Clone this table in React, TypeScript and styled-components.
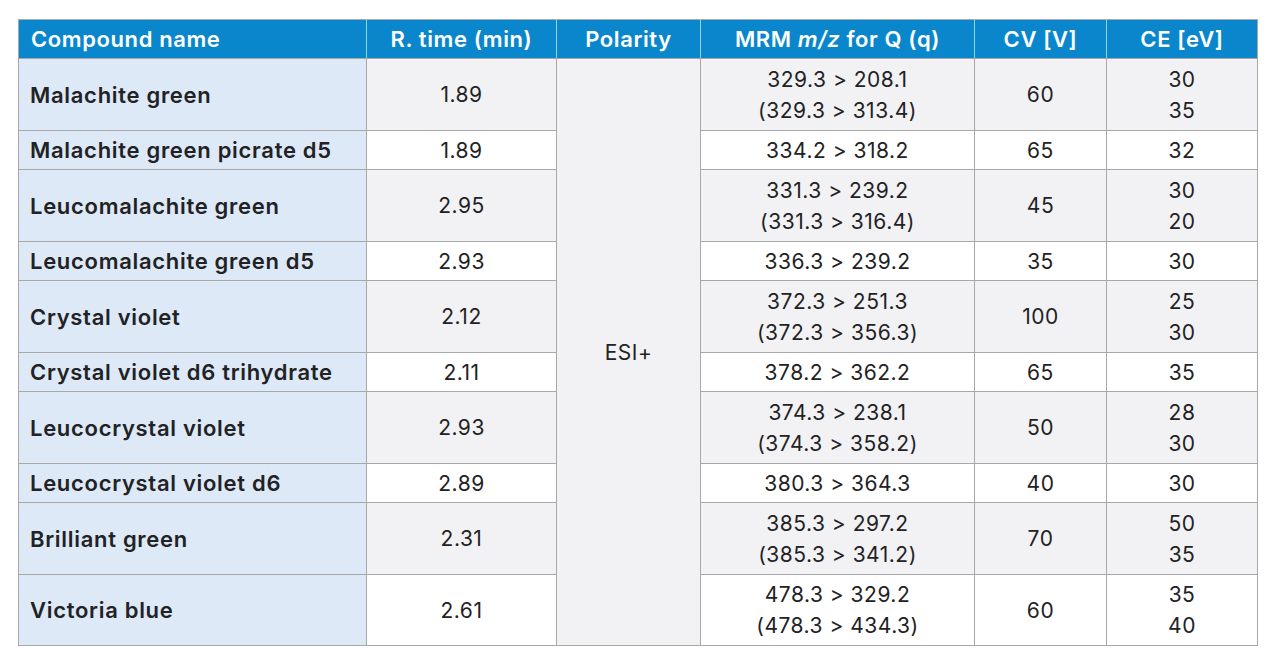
import React from "react";
import styled, { createGlobalStyle } from "styled-components";

// Table data
const rows = [
  { name: "Malachite green", rt: "1.89", mrm: ["329.3 > 208.1", "(329.3 > 313.4)"], cv: "60", ce: ["30", "35"] },
  { name: "Malachite green picrate d5", rt: "1.89", mrm: ["334.2 > 318.2"], cv: "65", ce: ["32"] },
  { name: "Leucomalachite green", rt: "2.95", mrm: ["331.3 > 239.2", "(331.3 > 316.4)"], cv: "45", ce: ["30", "20"] },
  { name: "Leucomalachite green d5", rt: "2.93", mrm: ["336.3 > 239.2"], cv: "35", ce: ["30"] },
  { name: "Crystal violet", rt: "2.12", mrm: ["372.3 > 251.3", "(372.3 > 356.3)"], cv: "100", ce: ["25", "30"] },
  { name: "Crystal violet d6 trihydrate", rt: "2.11", mrm: ["378.2 > 362.2"], cv: "65", ce: ["35"] },
  { name: "Leucocrystal violet", rt: "2.93", mrm: ["374.3 > 238.1", "(374.3 > 358.2)"], cv: "50", ce: ["28", "30"] },
  { name: "Leucocrystal violet d6", rt: "2.89", mrm: ["380.3 > 364.3"], cv: "40", ce: ["30"] },
  { name: "Brilliant green", rt: "2.31", mrm: ["385.3 > 297.2", "(385.3 > 341.2)"], cv: "70", ce: ["50", "35"] },
  { name: "Victoria blue", rt: "2.61", mrm: ["478.3 > 329.2", "(478.3 > 434.3)"], cv: "60", ce: ["35", "40"] },
];

const GlobalStyle = createGlobalStyle`
  body {
    margin: 0;
    background: #ffffff;
    font-family: Inter, "Noto Sans", "Liberation Sans", sans-serif;
  }
`;

const Page = styled.div`
  padding: 19px 0 0 18px;
`;

const Table = styled.table`
  border-collapse: collapse;
  table-layout: fixed;
  width: 1239px;
  border: 1px solid #a8a8a8;
  color: #222225;
  font-size: 21px;
  letter-spacing: 0.5px;
`;

const HeadRow = styled.tr`
  height: 39px;
  background: #0a87cc;
`;

const Th = styled.th<{ $left?: boolean }>`
  color: #ffffff;
  font-size: 22px;
  font-weight: 600;
  letter-spacing: 0.6px;
  text-align: ${(p) => (p.$left ? "left" : "center")};
  padding: 0 12px;
  border-left: 1px solid #8fd6f2;
  border-bottom: 1px solid #a8a8a8;
  white-space: nowrap;
  &:first-child {
    border-left: none;
  }
`;

const Row = styled.tr<{ $tall: boolean }>`
  height: ${(p) => (p.$tall ? "72px" : "39px")};
  &:last-child {
    height: 71px;
  }
`;

const NameCell = styled.td`
  background: #dde9f7;
  font-size: 22px;
  font-weight: 600;
  letter-spacing: 0.7px;
  padding: 0 11px;
  border: 1px solid #a8a8a8;
  white-space: nowrap;
`;

const Cell = styled.td<{ $shade: boolean }>`
  background: ${(p) => (p.$shade ? "#f2f2f4" : "#ffffff")};
  text-align: center;
  line-height: 31px;
  padding: 0 6px;
  border: 1px solid #a8a8a8;
  white-space: nowrap;
`;

const PolarityCell = styled.td`
  background: #f2f2f4;
  text-align: center;
  border: 1px solid #a8a8a8;
`;

const Line = styled.div``;

export default function App() {
  return (
    <Page>
      <GlobalStyle />
      <Table>
        <colgroup>
          <col style={{ width: 348 }} />
          <col style={{ width: 190 }} />
          <col style={{ width: 144 }} />
          <col style={{ width: 274 }} />
          <col style={{ width: 132 }} />
          <col style={{ width: 151 }} />
        </colgroup>
        <thead>
          <HeadRow>
            <Th $left>Compound name</Th>
            <Th>R. time (min)</Th>
            <Th>Polarity</Th>
            <Th>
              MRM <i>m/z</i> for Q (q)
            </Th>
            <Th>CV [V]</Th>
            <Th>CE [eV]</Th>
          </HeadRow>
        </thead>
        <tbody>
          {rows.map((r, i) => {
            const shade = i % 2 === 0;
            return (
              <Row key={r.name} $tall={r.mrm.length > 1}>
                <NameCell>{r.name}</NameCell>
                <Cell $shade={shade}>{r.rt}</Cell>
                {i === 0 && <PolarityCell rowSpan={rows.length}>ESI+</PolarityCell>}
                <Cell $shade={shade}>
                  {r.mrm.map((m) => (
                    <Line key={m}>{m}</Line>
                  ))}
                </Cell>
                <Cell $shade={shade}>{r.cv}</Cell>
                <Cell $shade={shade}>
                  {r.ce.map((c, j) => (
                    <Line key={j}>{c}</Line>
                  ))}
                </Cell>
              </Row>
            );
          })}
        </tbody>
      </Table>
    </Page>
  );
}
